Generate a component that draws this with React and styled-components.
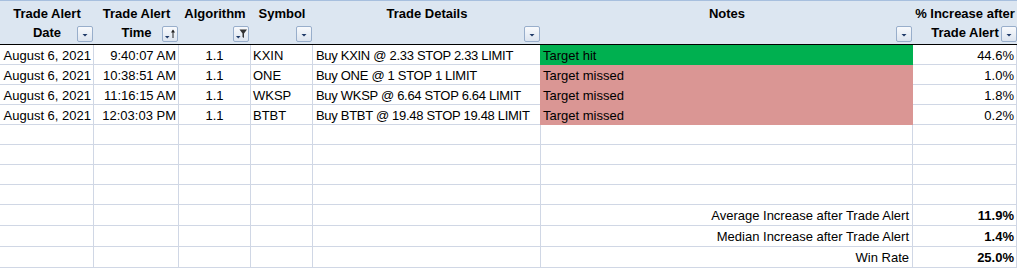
import styled, { createGlobalStyle } from 'styled-components';

const COLS = '94px 85px 72px 62px 228px 372px 104px';
const GRID = '#D0D7E5';

const GlobalStyle = createGlobalStyle`
  body {
    margin: 0;
    background: #fff;
    font-family: 'Liberation Sans', Arial, sans-serif;
  }
`;

const Sheet = styled.div`
  width: 1017px;
  font-family: 'Liberation Sans', Arial, sans-serif;
  font-size: 13px;
  color: #000;
`;

const HeaderRow = styled.div`
  display: grid;
  grid-template-columns: ${COLS};
  height: 45px;
  box-sizing: border-box;
  background: #DCE6F1;
  border-top: 1px solid #A7BFDE;
  border-bottom: 1px solid #000;
`;

const HeaderCell = styled.div`
  position: relative;
  padding-top: 3px;
  text-align: center;
  font-weight: bold;
  line-height: 19px;
  white-space: nowrap;
`;

const DropButton = styled.div`
  position: absolute;
  right: ${p => p.$right ?? 1}px;
  bottom: 2px;
  width: 16px;
  height: 16px;
  box-sizing: border-box;
  border: 1px solid #98AECB;
  border-radius: 2px;
  background: linear-gradient(#F8FAFD, #DCE4EF);
  display: flex;
  align-items: center;
  justify-content: center;
`;

const Row = styled.div`
  display: grid;
  grid-template-columns: ${COLS};
  height: ${p => p.$h}px;
`;

const Cell = styled.div`
  box-sizing: border-box;
  padding: 3px ${p => p.$padR ?? 2}px 0 ${p => p.$padL ?? 2}px;
  line-height: 16px;
  white-space: nowrap;
  overflow: hidden;
  text-align: ${p => p.$align || 'left'};
  font-weight: ${p => (p.$bold ? 'bold' : 'normal')};
  letter-spacing: ${p => (p.$tight ? '-0.3px' : 'normal')};
  background: ${p => p.$fill || 'transparent'};
  border-right: 1px solid ${p => p.$fill || GRID};
  border-bottom: 1px solid ${p => p.$fill || GRID};
  box-shadow: ${p => (p.$fill ? `-1px 0 0 ${p.$fill}` : 'none')};
`;

const NAVY = '#1F3A68';

const PlainIcon = () => (
  <svg width="14" height="14" viewBox="0 0 14 14">
    <polygon points="4.5,7 9.5,7 7,9.5" fill={NAVY} />
  </svg>
);

const SortIcon = () => (
  <svg width="14" height="14" viewBox="0 0 14 14">
    <polygon points="2,9 6.5,9 4.25,11.5" fill={NAVY} />
    <line x1="10" y1="3.5" x2="10" y2="11" stroke="#222" strokeWidth="1" />
    <polygon points="8,5.5 12,5.5 10,2.5" fill="#222" />
  </svg>
);

const FilterIcon = () => (
  <svg width="14" height="14" viewBox="0 0 14 14">
    <polygon points="2,9 6.5,9 4.25,11.5" fill={NAVY} />
    <polygon points="5.5,2.5 13,2.5 10,6.5 10,11 8.5,10 8.5,6.5" fill="#333" />
  </svg>
);

const headers = [
  { lines: ['Trade Alert', 'Date'], icon: 'plain' },
  { lines: ['Trade Alert', 'Time'], icon: 'sort' },
  { lines: ['Algorithm'], icon: 'filter', right: 2 },
  { lines: ['Symbol'], icon: 'plain' },
  { lines: ['Trade Details'], icon: 'plain' },
  { lines: ['Notes'], icon: 'plain' },
  { lines: ['% Increase after', 'Trade Alert'], icon: 'plain', right: 0 },
];

const trades = [
  { date: 'August 6, 2021', time: '9:40:07 AM', algo: '1.1', symbol: 'KXIN', details: 'Buy KXIN @ 2.33 STOP 2.33 LIMIT', note: 'Target hit', hit: true, pct: '44.6%' },
  { date: 'August 6, 2021', time: '10:38:51 AM', algo: '1.1', symbol: 'ONE', details: 'Buy ONE @ 1 STOP 1 LIMIT', note: 'Target missed', hit: false, pct: '1.0%' },
  { date: 'August 6, 2021', time: '11:16:15 AM', algo: '1.1', symbol: 'WKSP', details: 'Buy WKSP @ 6.64 STOP 6.64 LIMIT', note: 'Target missed', hit: false, pct: '1.8%' },
  { date: 'August 6, 2021', time: '12:03:03 PM', algo: '1.1', symbol: 'BTBT', details: 'Buy BTBT @ 19.48 STOP 19.48 LIMIT', note: 'Target missed', hit: false, pct: '0.2%' },
];

const summary = [
  { label: 'Average Increase after Trade Alert', value: '11.9%' },
  { label: 'Median Increase after Trade Alert', value: '1.4%' },
  { label: 'Win Rate', value: '25.0%' },
];

const icons = { plain: PlainIcon, sort: SortIcon, filter: FilterIcon };

const EmptyCells = ({ count }) =>
  Array.from({ length: count }, (_, i) => <Cell key={i} />);

export default function App() {
  return (
    <Sheet>
      <GlobalStyle />
      <HeaderRow>
        {headers.map((h, i) => {
          const Icon = icons[h.icon];
          return (
            <HeaderCell key={i}>
              {h.lines.map((l, j) => (
                <div key={j}>{l}</div>
              ))}
              <DropButton $right={h.right}>
                <Icon />
              </DropButton>
            </HeaderCell>
          );
        })}
      </HeaderRow>

      {trades.map((t, i) => (
        <Row key={i} $h={20}>
          <Cell $align="right">{t.date}</Cell>
          <Cell $align="right">{t.time}</Cell>
          <Cell $align="center">{t.algo}</Cell>
          <Cell>{t.symbol}</Cell>
          <Cell $padL={3} $tight>{t.details}</Cell>
          <Cell $fill={t.hit ? '#00B050' : '#DA9694'}>{t.note}</Cell>
          <Cell $align="right">{t.pct}</Cell>
        </Row>
      ))}

      {[0, 1, 2, 3].map(i => (
        <Row key={`e${i}`} $h={20}>
          <EmptyCells count={7} />
        </Row>
      ))}

      {summary.map((s, i) => (
        <Row key={`s${i}`} $h={21}>
          <EmptyCells count={5} />
          <Cell $align="right" $padR={3}>{s.label}</Cell>
          <Cell $align="right" $bold>{s.value}</Cell>
        </Row>
      ))}
    </Sheet>
  );
}
